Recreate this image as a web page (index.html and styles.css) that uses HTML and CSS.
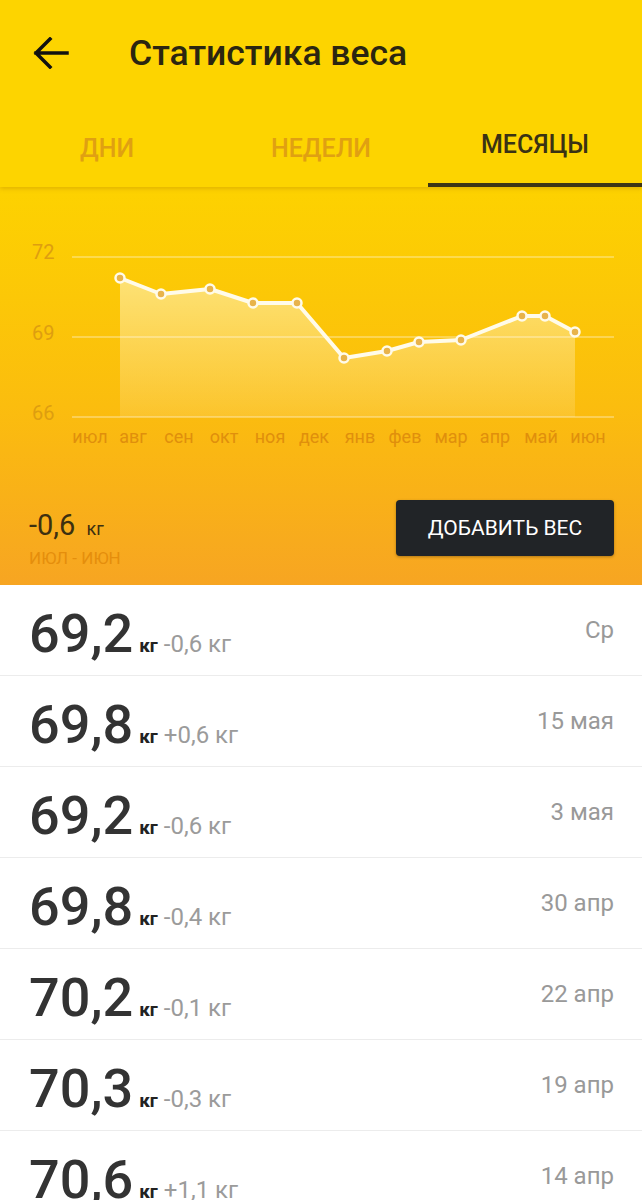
FILE: index.html
```html
<!DOCTYPE html>
<html lang="ru">
<head>
    <meta charset="UTF-8">
    <meta name="viewport" content="width=device-width, initial-scale=1.0">
    <title>Статистика веса</title>
    <link rel="stylesheet" href="styles.css">
</head>
<body>
    <header class="app-header">
        <div class="toolbar">
            <svg class="back-icon" width="36" height="32" viewBox="0 0 36 32">
                <path d="M34 16H3M17 2L3 16l14 14" fill="none" stroke="#111" stroke-width="3.5" stroke-linecap="square"/>
            </svg>
            <h1 class="title">Статистика веса</h1>
        </div>
        <nav class="tabs">
            <div class="tab">ДНИ</div>
            <div class="tab">НЕДЕЛИ</div>
            <div class="tab tab-active">МЕСЯЦЫ</div>
        </nav>
    </header>

    <section class="stats">
        <svg class="chart" width="642" height="270" viewBox="0 0 642 270">
            <defs>
                <linearGradient id="area" x1="0" y1="0" x2="0" y2="1">
                    <stop offset="0" stop-color="#fff" stop-opacity="0.45"/>
                    <stop offset="1" stop-color="#fff" stop-opacity="0.12"/>
                </linearGradient>
            </defs>
            <g class="grid">
                <line x1="72" y1="70" x2="614" y2="70"/>
                <line x1="72" y1="150" x2="614" y2="150"/>
                <line x1="72" y1="230" x2="614" y2="230"/>
            </g>
            <g class="y-labels">
                <text x="32" y="72">72</text>
                <text x="32" y="153">69</text>
                <text x="32" y="233">66</text>
            </g>
            <polygon class="area" points="120,91 161,107 210,102 253,116 297,116 344,171 387,164 419,155 461,153 522,129 545,129 575,145 575,230 120,230"/>
            <polyline class="line" points="120,91 161,107 210,102 253,116 297,116 344,171 387,164 419,155 461,153 522,129 545,129 575,145"/>
            <g class="dots">
                <circle cx="120" cy="91" r="4.5"/>
                <circle cx="161" cy="107" r="4.5"/>
                <circle cx="210" cy="102" r="4.5"/>
                <circle cx="253" cy="116" r="4.5"/>
                <circle cx="297" cy="116" r="4.5"/>
                <circle cx="344" cy="171" r="4.5"/>
                <circle cx="387" cy="164" r="4.5"/>
                <circle cx="419" cy="155" r="4.5"/>
                <circle cx="461" cy="153" r="4.5"/>
                <circle cx="522" cy="129" r="4.5"/>
                <circle cx="545" cy="129" r="4.5"/>
                <circle cx="575" cy="145" r="4.5"/>
            </g>
            <g class="x-labels">
                <text x="90" y="256">июл</text>
                <text x="133" y="256">авг</text>
                <text x="179" y="256">сен</text>
                <text x="224" y="256">окт</text>
                <text x="270" y="256">ноя</text>
                <text x="314" y="256">дек</text>
                <text x="360" y="256">янв</text>
                <text x="405" y="256">фев</text>
                <text x="451" y="256">мар</text>
                <text x="495" y="256">апр</text>
                <text x="541" y="256">май</text>
                <text x="588" y="256">июн</text>
            </g>
        </svg>

        <div class="summary">
            <div class="change">
                <div class="change-value">-0,6 <span class="change-unit">кг</span></div>
                <div class="change-period">июл - июн</div>
            </div>
            <button class="add-btn">ДОБАВИТЬ ВЕС</button>
        </div>
    </section>

    <ul class="entries">
        <li class="entry">
            <div class="weight"><span class="weight-num">69,2</span><span class="weight-unit">кг</span><span class="weight-diff">-0,6 кг</span></div>
            <div class="date">Ср</div>
        </li>
        <li class="entry">
            <div class="weight"><span class="weight-num">69,8</span><span class="weight-unit">кг</span><span class="weight-diff">+0,6 кг</span></div>
            <div class="date">15 мая</div>
        </li>
        <li class="entry">
            <div class="weight"><span class="weight-num">69,2</span><span class="weight-unit">кг</span><span class="weight-diff">-0,6 кг</span></div>
            <div class="date">3 мая</div>
        </li>
        <li class="entry">
            <div class="weight"><span class="weight-num">69,8</span><span class="weight-unit">кг</span><span class="weight-diff">-0,4 кг</span></div>
            <div class="date">30 апр</div>
        </li>
        <li class="entry">
            <div class="weight"><span class="weight-num">70,2</span><span class="weight-unit">кг</span><span class="weight-diff">-0,1 кг</span></div>
            <div class="date">22 апр</div>
        </li>
        <li class="entry">
            <div class="weight"><span class="weight-num">70,3</span><span class="weight-unit">кг</span><span class="weight-diff">-0,3 кг</span></div>
            <div class="date">19 апр</div>
        </li>
        <li class="entry">
            <div class="weight"><span class="weight-num">70,6</span><span class="weight-unit">кг</span><span class="weight-diff">+1,1 кг</span></div>
            <div class="date">14 апр</div>
        </li>
    </ul>
</body>
</html>
```

FILE: styles.css
```css
body {
    margin: 0;
    font-family: Roboto, "Liberation Sans", sans-serif;
    background: #fff;
    overflow: hidden;
}
.app-header {
    background-color: #fdd400;
    position: relative;
    z-index: 1;
    box-shadow: 0 2px 4px rgba(150, 100, 0, 0.25);
}
.toolbar {
    height: 105px;
    display: flex;
    align-items: center;
    padding-left: 33px;
}
.back-icon {
    display: block;
}
.title {
    margin: 0 0 0 60px;
    font-size: 35.5px;
    font-weight: 500;
    color: #2b2610;
}
.tabs {
    display: grid;
    grid-template-columns: repeat(3, 1fr);
    height: 82px;
}
.tab {
    display: flex;
    align-items: center;
    justify-content: center;
    font-size: 25px;
    font-weight: 500;
    color: #e0a012;
    box-sizing: border-box;
    padding-top: 4px;
}
.tab-active {
    color: #3a3214;
    border-bottom: 4px solid #3d3516;
    padding-top: 0;
}
.stats {
    height: 398px;
    background: linear-gradient(#fdd200, #fbbd0e 55%, #f7a522);
}
.chart {
    display: block;
}
.grid line {
    stroke: rgba(255, 255, 255, 0.4);
    stroke-width: 1.5;
}
.y-labels text, .x-labels text {
    font-family: Roboto, sans-serif;
}
.y-labels text {
    font-size: 20px;
    fill: #de9e10;
}
.x-labels text {
    font-size: 18px;
    text-anchor: middle;
    fill: #e08f0c;
}
.area {
    fill: url(#area);
}
.line {
    fill: none;
    stroke: #fffbea;
    stroke-width: 4;
    stroke-linejoin: round;
}
.dots circle {
    fill: #e8b34a;
    stroke: #fffbea;
    stroke-width: 2.5;
}
.summary {
    display: flex;
    justify-content: space-between;
    align-items: flex-start;
    padding: 43px 28px 0 29px;
}
.change {
    padding-top: 10px;
}
.change-value {
    font-size: 29px;
    color: #3d3010;
    line-height: 30px;
}
.change-unit {
    font-size: 18px;
    margin-left: 4px;
}
.change-period {
    font-size: 17px;
    text-transform: uppercase;
    color: #e58e0c;
    margin-top: 4px;
}
.add-btn {
    width: 218px;
    height: 56px;
    border: none;
    border-radius: 4px;
    background-color: #212427;
    color: #fff;
    font-family: Roboto, sans-serif;
    font-size: 21px;
    box-shadow: 0 1px 3px rgba(0, 0, 0, 0.3);
}
.entries {
    list-style: none;
    margin: 0;
    padding: 0;
}
.entry {
    height: 90px;
    display: flex;
    align-items: center;
    justify-content: space-between;
    padding: 0 28px 0 29px;
    border-bottom: 1px solid #ececec;
}
.weight {
    padding-top: 8px;
    display: flex;
    align-items: baseline;
}
.weight-num {
    font-size: 54px;
    font-weight: 500;
    color: #333;
    line-height: 1;
}
.weight-unit {
    font-size: 19px;
    font-weight: 700;
    color: #222;
    margin-left: 6px;
}
.weight-diff {
    font-size: 24px;
    color: #9b9b9b;
    margin-left: 6px;
}
.date {
    font-size: 24px;
    color: #999;
}
```
